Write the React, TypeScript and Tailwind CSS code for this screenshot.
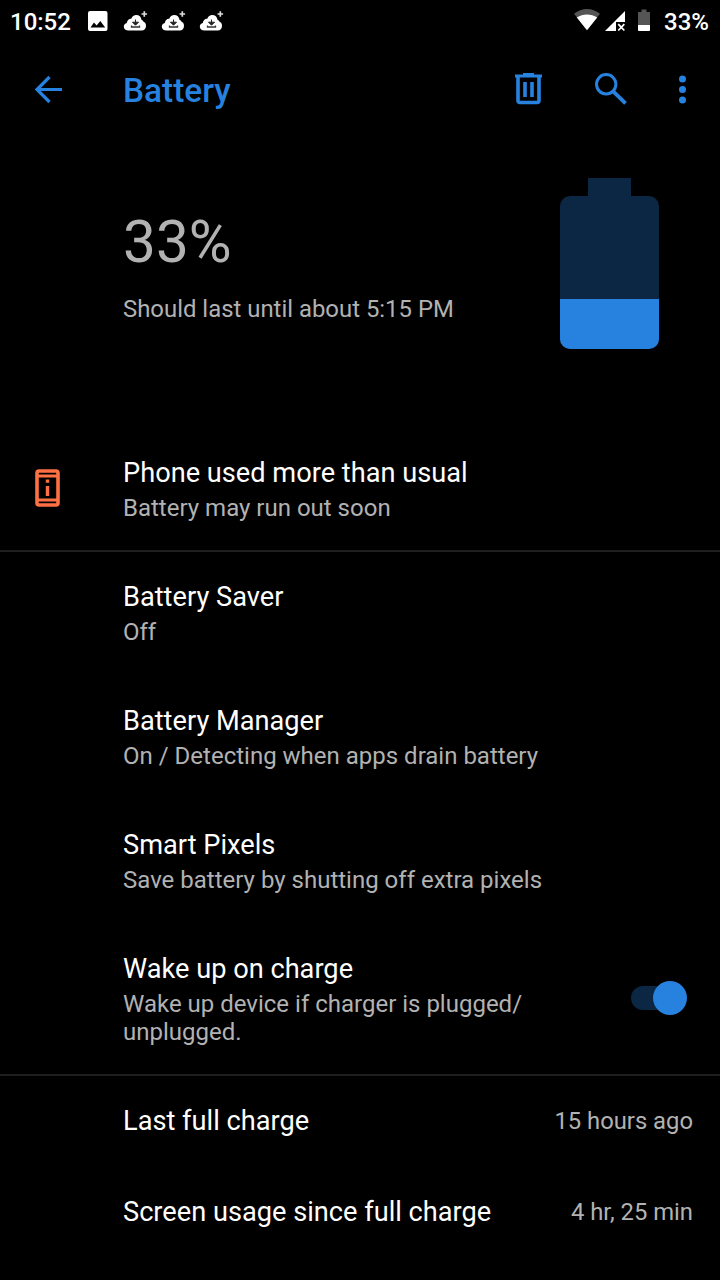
import type { ReactNode } from "react";

function CloudDownload() {
  return (
    <svg className="h-6 w-[26px]" viewBox="0 0 26 24">
      <path
        fill="#fff"
        d="M5.500 20.500C2.800 20.500.8 19 .8 16.800c0-2 1.300-3.300 3-3.700C4.200 10.200 6 8.500 8.200 8.700 9.300 6.200 11 5 13.200 5c3 0 5 2 5.400 4.900 1 .1 1.500.7 1.700 1.700 1.700.6 2.700 2.200 2.700 4.400 0 2.700-1.800 4.500-4.200 4.500z"
      />
      <path d="M12.500 9.500v3M9.500 12.200h6l-3 3z" fill="#222" stroke="#222" strokeWidth="1" />
      <path d="M8.500 15.500v1.500h8v-1.500" fill="none" stroke="#333" strokeWidth="1.300" />
      <path d="M21.300 1.200v5.600M18.500 4h5.600" stroke="#ddd" strokeWidth="1.700" />
    </svg>
  );
}

function StatusBar() {
  return (
    <header className="flex h-11 items-center pl-[10px] pr-[11px] text-[24px] font-medium text-white">
      <span className="w-[77px] shrink-0 leading-[44px]">10:52</span>
      <svg className="mr-[14px] h-6 w-[22px]" viewBox="0 0 22 24">
        <path
          fill="#fff"
          fillRule="evenodd"
          d="M3 1h15.500a2 2 0 0 1 2 2v16a2 2 0 0 1-2 2H3a2 2 0 0 1-2-2V3a2 2 0 0 1 2-2zM3.500 17.500h14.700l-4.900-6.600-3.700 4.700-2.600-3z"
        />
      </svg>
      <div className="flex gap-3">
        <CloudDownload />
        <CloudDownload />
        <CloudDownload />
      </div>
      <svg className="ml-auto mr-[13px] h-7 w-[78px] shrink-0" viewBox="573 8 78 28">
        <path d="M574 13.800C582 7.300 592 7.300 600 13.800L587 30z" fill="#555" />
        <path d="M576.800 17.500C583 13.500 591 13.500 597.200 17.500L587 30.300z" fill="#fff" />
        <path d="M605 31L625 11V22H616V31z" fill="#fff" />
        <path d="M618.300 24.200l6 6.300M624.300 24.200l-6 6.300" stroke="#fff" strokeWidth="1.800" />
        <path d="M641.500 9.500h5V12h3.500v13h-12V12h3.500z" fill="#555" />
        <path d="M638 25h12v5a1 1 0 0 1-1 1h-10a1 1 0 0 1-1-1z" fill="#fff" />
      </svg>
      <span className="leading-[44px]">33%</span>
    </header>
  );
}

function Toolbar() {
  return (
    <nav className="flex h-[92px] items-center pl-[34px] pr-[31px] text-[#2782df]">
      <svg className="h-8 w-[30px]" viewBox="34 74 30 32" fill="none" stroke="currentColor" strokeWidth="3.200">
        <path d="M62 89.500H37M49.500 77L37 89.500 49.500 102" />
      </svg>
      <h1 className="ml-[59px] flex-1 pt-0.5 text-[33.400px] font-medium leading-10">Battery</h1>
      <svg className="h-9 w-7" viewBox="514 72 28 36" fill="none" stroke="currentColor">
        <path d="M515 76H542M523 74.500H534" strokeWidth="3" />
        <path d="M518 77v23.500a2 2 0 0 0 2 2h17a2 2 0 0 0 2-2V77" strokeWidth="3.600" />
        <path d="M525 82v15M532 82v15" strokeWidth="3.600" />
      </svg>
      <svg className="ml-[52px] h-9 w-[34px]" viewBox="594 72 34 36" fill="none" stroke="currentColor">
        <circle cx="606.200" cy="84.300" r="9.700" strokeWidth="3" />
        <path d="M613.200 91.300L625.500 103.300" strokeWidth="3.800" />
      </svg>
      <svg className="ml-[49px] h-8 w-3" viewBox="0 0 12 32" fill="currentColor">
        <circle cx="5.500" cy="5" r="3.500" />
        <circle cx="5.500" cy="15.500" r="3.500" />
        <circle cx="5.500" cy="26" r="3.500" />
      </svg>
    </nav>
  );
}

function Row({ title, children, icon, control }: { title: string; children: ReactNode; icon?: ReactNode; control?: ReactNode }) {
  return (
    <div className="flex items-center pb-[29px] pr-[33px] pt-[28px]">
      <div className="w-[123px] shrink-0 pl-[35px]">{icon}</div>
      <div className="min-w-0 flex-1">
        <h2 className="text-[27.2px] leading-[36px] text-white">{title}</h2>
        <p className="mt-[3px] whitespace-nowrap text-[24px] leading-[28px] text-[#b2b2b2]">{children}</p>
      </div>
      {control}
    </div>
  );
}

function ValueRow({ title, value }: { title: string; value: string }) {
  return (
    <div className="flex h-[91px] items-center justify-between pl-[123px] pr-[27px]">
      <h2 className="text-[27.2px] text-white">{title}</h2>
      <span className="text-[23.8px] text-[#b2b2b2]">{value}</span>
    </div>
  );
}

export default function App() {
  return (
    <div className="h-[1280px] w-[720px] overflow-hidden bg-black font-['Roboto',sans-serif]">
      <StatusBar />
      <Toolbar />
      <section className="flex h-[291px] items-start justify-between pl-[123px] pr-[61px] pt-[42px]">
        <div className="pt-[28px] text-[#b2b2b2]">
          <div className="text-[58.500px] leading-[72px]">33%</div>
          <p className="mt-[17px] text-[23.900px] leading-[28px]">Should last until about 5:15 PM</p>
        </div>
        <div className="flex flex-col items-center">
          <div className="h-[18px] w-[43px] bg-[#0c2743]" />
          <div className="flex h-[153px] w-[99px] flex-col justify-end overflow-hidden rounded-[10px] bg-[#0c2743]">
            <div className="h-[50px] bg-[#2782df]" />
          </div>
        </div>
      </section>
      <div className="h-[125px] border-b-2 border-[#1f1f1f]">
        <Row
          title="Phone used more than usual"
          icon={
            <svg className="-mt-0.5 h-[38px] w-[25px]" viewBox="0 0 25 38" fill="none" stroke="#ff7043">
              <rect x="2" y="2" width="21" height="34" rx="2" strokeWidth="3.600" />
              <path d="M2 7h21M2 31h21" strokeWidth="3.200" />
              <path d="M12.500 10.500v3.200M12.500 17v10" strokeWidth="3.400" />
            </svg>
          }
        >
          Battery may run out soon
        </Row>
      </div>
      <div className="-mt-px h-[525px] border-b-2 border-[#1f1f1f]">
        <Row title="Battery Saver">Off</Row>
        <Row title="Battery Manager">On / Detecting when apps drain battery</Row>
        <Row title="Smart Pixels">Save battery by shutting off extra pixels</Row>
        <Row
          title="Wake up on charge"
          control={
            <div className="-mt-0.5 flex h-[34px] w-14 items-center">
              <div className="h-6 w-[38px] rounded-full bg-[#0c2743]" />
              <div className="-ml-4 size-[34px] shrink-0 rounded-full bg-[#2782df]" />
            </div>
          }
        >
          Wake up device if charger is plugged/
          <br />
          unplugged.
        </Row>
      </div>
      <div>
        <ValueRow title="Last full charge" value="15 hours ago" />
        <ValueRow title="Screen usage since full charge" value="4 hr, 25 min" />
      </div>
    </div>
  );
}
